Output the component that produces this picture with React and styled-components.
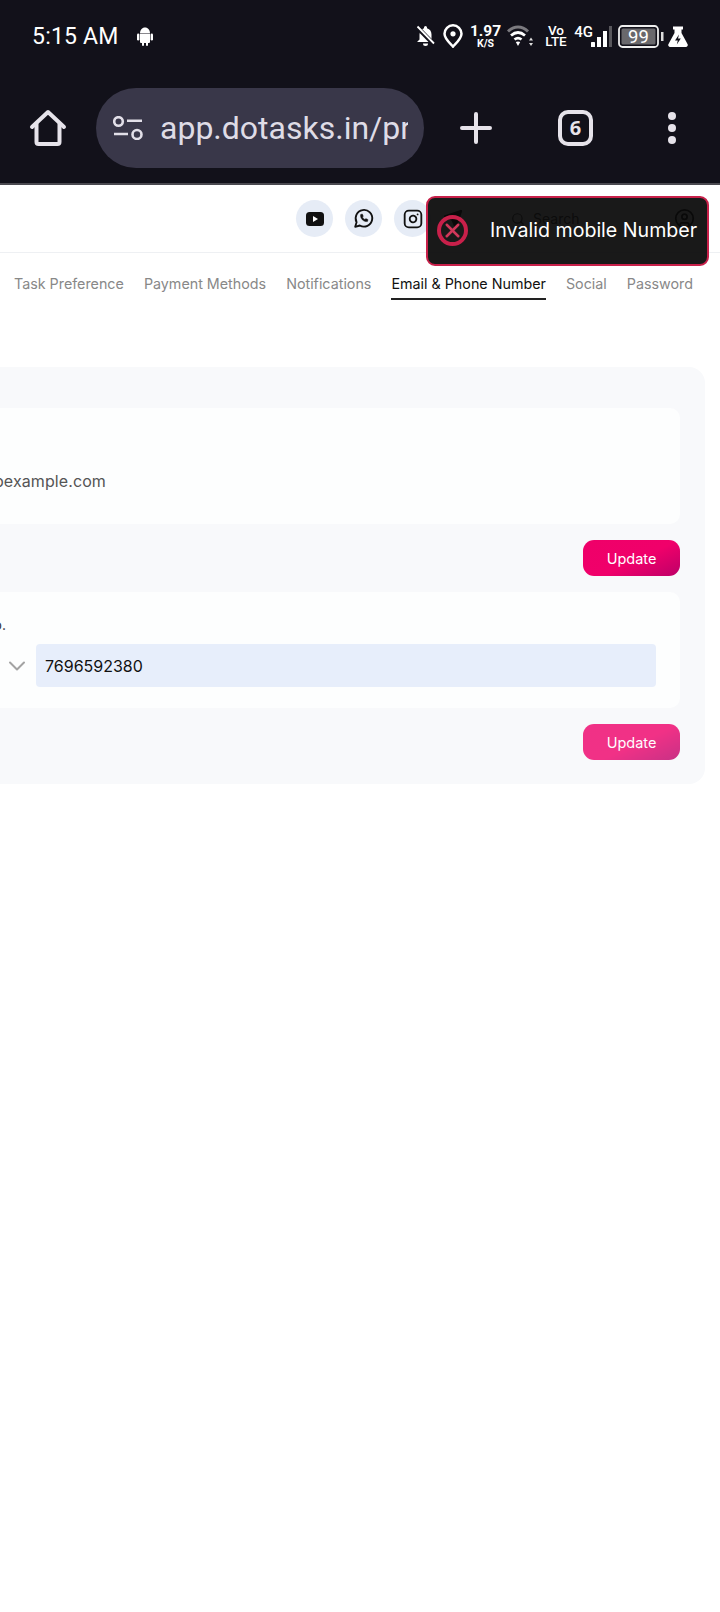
import React from "react";
import styled, { createGlobalStyle } from "styled-components";
import { ChevronDown, Instagram, Send, Search, CircleUser, X } from "lucide-react";

const Global = createGlobalStyle`
  html, body { margin: 0; padding: 0; background: #fff; }
  body { width: 720px; height: 1612px; overflow: hidden; font-family: Inter, "Liberation Sans", sans-serif; }
`;
const Page = styled.div`
  position: relative; width: 720px; height: 1612px; overflow: hidden; background: #fff;
`;
const Chrome = styled.header`
  background: #12111a; height: 183px; border-bottom: 2px solid #4a4950; box-sizing: content-box;
  display: flex; flex-direction: column;
`;
const StatusBar = styled.div`
  height: 72px; display: flex; align-items: center; justify-content: space-between; padding: 0 32px 0 32px; color: #fff;
`;
const StatusLeft = styled.div`display: flex; align-items: center; gap: 18px;`;
const Time = styled.span`font: 400 23px Roboto, sans-serif; letter-spacing: 0.2px;`;
const StatusRight = styled.div`display: flex; align-items: center; height: 30px;`;
const StatusItem = styled.div`
  display: flex; flex: none; align-items: center; justify-content: center; margin-left: ${p => p.$ml || 0}px;
`;
const Speed = styled(StatusItem)`
  flex-direction: column; width: 27px; font-family: Roboto, sans-serif; font-weight: 700;
  b { font-size: 15.5px; line-height: 14px; font-weight: 700; }
  span { font-size: 10.5px; line-height: 11px; }
`;
const Volte = styled(StatusItem)`
  flex-direction: column; width: 20px; font: 500 13.5px Roboto, sans-serif;
  span { line-height: 11px; height: 11px; display: block; }
`;
const Net = styled(StatusItem)`font: 500 15px Roboto, sans-serif; margin-bottom: 9px; width: 17px;`;
const Toolbar = styled.div`
  display: flex; align-items: center; height: 111px; position: relative;
`;
const IconSlot = styled.div`
  display: flex; align-items: center; justify-content: center; color: #e6e3ea; flex: none;
  width: ${p => p.$w}px;
`;
const Omnibox = styled.div`
  width: 328px; height: 80px; border-radius: 40px; background: #393749; flex: none; box-sizing: border-box;
  display: flex; align-items: center; padding: 0 16px 0 17px; overflow: hidden; color: #dfdce6;
`;
const Url = styled.span`
  font: 400 32px Roboto, sans-serif; margin-left: 17px; white-space: nowrap; overflow: hidden; width: 248px; display: block;
`;
const TabCount = styled.div`
  width: 35px; height: 36px; border: 4px solid #e6e3ea; border-radius: 10px; display: flex; align-items: center; justify-content: center; box-sizing: border-box;
  font: 700 20px "Open Sans", sans-serif; color: #e6e3ea;
`;
const TopRow = styled.div`
  height: 67px; border-bottom: 1px solid #eef0f3; display: flex; align-items: center; position: relative; box-sizing: content-box; padding-left: 296px; gap: 12px;
`;
const Circle = styled.div`
  width: 37px; height: 37px; border-radius: 50%; background: #e6ecf6; display: flex; align-items: center; justify-content: center; color: #111; flex: none;
`;
const Plain = styled.div`display: flex; align-items: center; color: #222; flex: none;`;
const SearchBox = styled.div`
  display: flex; align-items: center; gap: 8px; font-size: 14px; color: #444; margin-left: 36px; flex: none; width: 151px;
`;
const Tabs = styled.nav`
  display: flex; gap: 20px; padding-left: 14px; height: 46px; align-items: flex-start; box-sizing: border-box; padding-top: 22px; white-space: nowrap;
`;
const Tab = styled.div`
  font-size: 14.3px; line-height: 17px; padding-bottom: 6px; color: ${p => p.$active ? "#111" : "#888"};
  border-bottom: 2px solid ${p => p.$active ? "#222" : "transparent"};
`;
const Panel = styled.section`
  margin: 68px 15px 0 -40px; height: 417px; background: #f8f9fb; border-radius: 16px; padding: 41px 25px 0 0; box-sizing: border-box;
  display: flex; flex-direction: column;
`;
const Card = styled.div`
  background: #fdfefe; border-radius: 10px; height: 116px; box-sizing: border-box; padding-left: 40px; display: flex; flex-direction: column;
`;
const Email = styled.div`
  font-size: 16px; line-height: 20px; color: #555; margin-top: 63px; width: 106px; display: flex; justify-content: flex-end; white-space: nowrap; letter-spacing: 0.1px;
`;
const FieldLabel = styled.div`
  font-size: 14px; line-height: 16px; color: #333; margin-top: 25px; width: 6px; display: flex; justify-content: flex-end; white-space: nowrap;
`;
const PhoneRow = styled.div`
  display: flex; align-items: center; margin-top: 11px; margin-right: 24px; padding-left: 3px;
`;
const Chevron = styled.div`display: flex; color: #a3a3a3; width: 33px; flex: none;`;
const PhoneInput = styled.div`
  flex: 1; height: 43px; background: #e7eefb; border-radius: 4px; box-sizing: border-box; padding-left: 9px; display: flex; align-items: center; font-size: 16px; color: #111;
`;
const Actions = styled.div`display: flex; justify-content: flex-end; padding: 16px 0;`;
const UpdateButton = styled.button`
  width: 97px; height: 36px; border: 0; border-radius: 11px; color: #fff; font: 400 14.5px Inter, sans-serif; padding: 0;
  background: linear-gradient(155deg, #ef0069 0%, #f0006a 55%, #bd0068 100%);
  opacity: ${p => p.$faded ? 0.8 : 1};
`;
const Toast = styled.div`
  position: absolute; left: 426px; top: 196px; width: 283px; height: 70px; box-sizing: border-box; background: rgba(8, 8, 8, 0.93); border: 2px solid #c8204a; border-radius: 9px;
  display: flex; align-items: center; padding: 0 0 2px 9px; color: #fff; font-size: 19.6px; white-space: nowrap;
`;
const ToastIcon = styled.div`
  width: 31px; height: 31px; border: 4px solid #c8204a; border-radius: 50%; box-sizing: border-box; color: #d0385a; display: flex; align-items: center; justify-content: center; margin-right: 22px; flex: none;
`;

const Android = () => (
  <svg width="16" height="19" viewBox="0 0 16 19" fill="#fff"><path d="M3 6.500C3 3 5 .5 8 .5s5 2.500 5 6z"/><path d="M3 7h10v8a1 1 0 0 1-1 1h-1v2a1 1 0 0 1-2 0v-2H7v2a1 1 0 0 1-2 0v-2H4a1 1 0 0 1-1-1z"/><rect x="0" y="6.500" width="2.400" height="7" rx="1.200"/><rect x="13.600" y="6.500" width="2.400" height="7" rx="1.200"/></svg>
);
const BellOff = () => (
  <svg width="19" height="22" viewBox="0 0 19 22"><path d="M9.500 1a1.500 1.500 0 0 1 1.500 1.500v.7c3 .8 4.500 3.400 4.500 6.300v5L18 17H1l2.500-2.500v-5C3.500 6.600 5 4 8 3.200v-.7A1.500 1.500 0 0 1 9.500 1z" fill="#fff"/><path d="M7 18.500h5a2.500 2.500 0 0 1-5 0z" fill="#fff"/><path d="M1 2l16.500 17" stroke="#12111a" strokeWidth="4.500"/><path d="M1.500 1.500l16.500 17" stroke="#fff" strokeWidth="1.800"/></svg>
);
const Pin = () => (
  <svg width="20" height="24" viewBox="0 0 20 24" fill="none"><path d="M10 1.300a8.500 8.500 0 0 1 8.500 8.500c0 5-5.500 9.500-8.500 12.800C7 19.300 1.500 14.800 1.500 9.800A8.500 8.500 0 0 1 10 1.300z" stroke="#fff" strokeWidth="2.500"/><circle cx="10" cy="9.800" r="2.600" fill="#fff"/></svg>
);
const Wifi = () => (
  <svg width="26" height="22" viewBox="0 0 26 22" fill="none"><path d="M1 6.500C7 .5 15 .5 21 6.500" stroke="#7b7a7f" strokeWidth="3"/><path d="M4 10.500c4.500-3.800 9.500-3.800 14 0" stroke="#fff" strokeWidth="2.800"/><path d="M7.500 14.500c2.500-2 4.500-2 7 0" stroke="#fff" strokeWidth="2.800"/><path d="M8.800 17l2.200 4 2.200-4c-1.500-.8-3-.8-4.400 0z" fill="#fff"/><path d="M22 15.500h4l-2-3zM22 18h4l-2 3z" fill="#ddd"/></svg>
);
const Signal = () => (
  <svg width="21" height="21" viewBox="0 0 21 21"><rect x="0" y="16" width="4" height="5" rx=".6" fill="#fff"/><rect x="6" y="11" width="4" height="10" fill="#fff"/><rect x="12" y="5" width="4" height="16" fill="#fff"/><rect x="18" y="0" width="3" height="21" fill="#58575c"/></svg>
);
const Battery = () => (
  <svg width="46" height="23" viewBox="0 0 46 23"><rect x="1" y="1" width="39" height="21" rx="3.500" fill="none" stroke="#eee" strokeWidth="1.800"/><rect x="3.500" y="3.500" width="34" height="16" rx="1.500" fill="#69686c"/><rect x="43" y="7" width="2.500" height="9" fill="#ddd"/><text x="20.500" y="18" textAnchor="middle" fill="#fff" fontSize="18.500" fontFamily="Roboto">99</text></svg>
);
const Flask = () => (
  <svg width="20" height="21" viewBox="0 0 20 21"><path d="M5 .5h10v3h-1.500v3.500L19.500 18a2 2 0 0 1-1.800 3H2.300a2 2 0 0 1-1.800-3L6.500 7V3.500H5z" fill="#fff"/><path d="M11 8.500l-4 6h2.800l-1 4 4-6H10z" fill="#12111a"/></svg>
);
const Home = () => (
  <svg width="38" height="38" viewBox="0 0 38 38" fill="none" stroke="#e6e3ea" strokeWidth="4" strokeLinecap="round" strokeLinejoin="round"><path d="M3 18L19 3l16 15"/><path d="M7.500 15v18a2 2 0 0 0 2 2h19a2 2 0 0 0 2-2V15"/></svg>
);
const PlusIcon = () => (
  <svg width="32" height="32" viewBox="0 0 32 32" stroke="#e6e3ea" strokeWidth="4" strokeLinecap="round"><path d="M2 16h28M16 2v28"/></svg>
);
const Tune = () => (
  <svg width="30" height="24" viewBox="0 0 30 24" fill="none" stroke="#e2dfe8" strokeWidth="2.600"><circle cx="5.500" cy="5.500" r="4.300"/><path d="M14 4.700h15M1 18h14"/><circle cx="24" cy="18.500" r="4.500"/></svg>
);
const Dots = () => (
  <svg width="10" height="34" viewBox="0 0 10 34" fill="#e6e3ea"><circle cx="5" cy="5" r="4"/><circle cx="5" cy="17" r="4"/><circle cx="5" cy="29" r="4"/></svg>
);
const Yt = () => (
  <svg width="18" height="14" viewBox="0 0 18 14"><rect width="18" height="14" rx="3.500" fill="#111"/><path d="M7 4l5 3-5 3z" fill="#fff"/></svg>
);
const Whats = () => (
  <svg width="21" height="21" viewBox="0 0 24 24" fill="none" stroke="#111" strokeWidth="2.100"><path d="M2.500 21.500l1.600-5.300A9.500 9.500 0 1 1 7.800 20z" strokeLinejoin="round"/><path d="M8.700 7.500c-.8 4.500 3.300 8.600 7.800 8l.7-2.200-2.600-1.200-1 1c-1.200-.5-2.300-1.600-2.800-2.800l1-1-1.200-2.500z" fill="#111" strokeWidth="0.500"/></svg>
);

export default function App() {
  return (
    <Page>
      <Global />
      <Chrome>
        <StatusBar>
          <StatusLeft><Time>5:15 AM</Time><Android /></StatusLeft>
          <StatusRight>
            <StatusItem><BellOff /></StatusItem>
            <StatusItem $ml={8}><Pin /></StatusItem>
            <Speed $ml={9}><b>1.97</b><span>K/S</span></Speed>
            <StatusItem $ml={8}><Wifi /></StatusItem>
            <Volte $ml={13}><span>Vo</span><span>LTE</span></Volte>
            <Net $ml={9}>4G</Net>
            <StatusItem $ml={-1}><Signal /></StatusItem>
            <StatusItem $ml={6}><Battery /></StatusItem>
            <StatusItem $ml={4}><Flask /></StatusItem>
          </StatusRight>
        </StatusBar>
        <Toolbar>
          <IconSlot $w={96}><Home /></IconSlot>
          <Omnibox><Tune /><Url>app.dotasks.in/profile</Url></Omnibox>
          <IconSlot $w={104}><PlusIcon /></IconSlot>
          <IconSlot $w={95}><TabCount>6</TabCount></IconSlot>
          <IconSlot $w={98}><Dots /></IconSlot>
        </Toolbar>
      </Chrome>
      <TopRow>
        <Circle><Yt /></Circle>
        <Circle><Whats /></Circle>
        <Circle><Instagram size={20} strokeWidth={2.2} /></Circle>
        <Plain><Send size={20} fill="#111" /></Plain>
        <SearchBox><Search size={14} /> Search</SearchBox>
        <Plain><CircleUser size={21} /></Plain>
      </TopRow>
      <Tabs>
        <Tab>Task Preference</Tab>
        <Tab>Payment Methods</Tab>
        <Tab>Notifications</Tab>
        <Tab $active>Email &amp; Phone Number</Tab>
        <Tab>Social</Tab>
        <Tab>Password</Tab>
      </Tabs>
      <Panel>
        <Card><Email>user@bexample.com</Email></Card>
        <Actions><UpdateButton>Update</UpdateButton></Actions>
        <Card>
          <FieldLabel>Phone No.</FieldLabel>
          <PhoneRow>
            <Chevron><ChevronDown size={28} strokeWidth={1.7} /></Chevron>
            <PhoneInput>7696592380</PhoneInput>
          </PhoneRow>
        </Card>
        <Actions><UpdateButton $faded>Update</UpdateButton></Actions>
      </Panel>
      <Toast><ToastIcon><X size={25} strokeWidth={2.6} /></ToastIcon>Invalid mobile Number</Toast>
    </Page>
  );
}
